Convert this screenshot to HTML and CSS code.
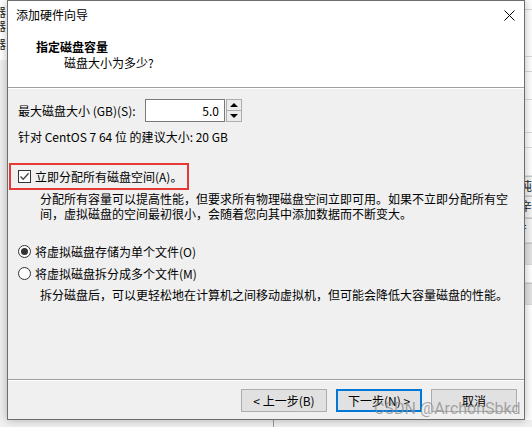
FILE: index.html
```html
<!DOCTYPE html>
<html lang="zh-CN">
<head>
    <meta charset="UTF-8">
    <title>添加硬件向导</title>
    <link rel="stylesheet" href="styles.css">
</head>
<body>
    <div class="desk">
        <div class="side side-left">
            <div class="glyphs">
                <span class="cut c1">器</span>
                <span class="cut c2">器</span>
                <span class="cut c3">器</span>
            </div>
        </div>

        <div class="dialog">
            <div class="header">
                <div class="titlebar">
                    <span class="title">添加硬件向导</span>
                    <svg class="close" width="11" height="11" viewBox="0 0 11 11">
                        <path d="M0.5 0.5 L10.5 10.5 M10.5 0.5 L0.5 10.5" stroke="#000" stroke-width="1" fill="none"/>
                    </svg>
                </div>
                <div class="heading">指定磁盘容量</div>
                <div class="subheading">磁盘大小为多少?</div>
            </div>

            <div class="content">
                <div class="size-row">
                    <span class="size-label">最大磁盘大小 (GB)(S):</span>
                    <div class="num-input">5.0</div>
                    <div class="spinner">
                        <span class="spin-btn"><i class="arrow-up"></i></span>
                        <span class="spin-btn"><i class="arrow-down"></i></span>
                    </div>
                </div>
                <p class="hint">针对 CentOS 7 64 位 的建议大小: 20 GB</p>

                <div class="highlight">
                    <span class="check">
                        <svg width="11" height="11" viewBox="0 0 11 11">
                            <path d="M1.5 5.5 L4.2 8.3 L9.6 2.2" stroke="#444" stroke-width="1.3" fill="none"/>
                        </svg>
                    </span>
                    立即分配所有磁盘空间(A)。
                </div>
                <p class="desc">分配所有容量可以提高性能，但要求所有物理磁盘空间立即可用。如果不立即分配所有空<br>间，虚拟磁盘的空间最初很小，会随着您向其中添加数据而不断变大。</p>

                <div class="radio-row first"><span class="radio on"></span>将虚拟磁盘存储为单个文件(O)</div>
                <div class="radio-row"><span class="radio"></span>将虚拟磁盘拆分成多个文件(M)</div>
                <p class="desc desc-split">拆分磁盘后，可以更轻松地在计算机之间移动虚拟机，但可能会降低大容量磁盘的性能。</p>
            </div>

            <div class="footer">
                <button class="btn">&lt; 上一步(B)</button>
                <button class="btn btn-default">下一步(N) &gt;</button>
                <button class="btn">取消</button>
            </div>
        </div>

        <div class="side side-right">
            <div class="cell h10"></div>
            <div class="cell h47"></div>
            <div class="cell h15"></div>
            <div class="cell h28"></div>
            <div class="cell h33"></div>
            <div class="cell h15"></div>
            <div class="cell h28 plain"></div>
            <div class="cell h20 txt"><span class="cut">盹</span></div>
            <div class="cell h22 txt"><span class="cut">辛</span></div>
            <div class="cell h25 txt"><span class="cut">扌</span></div>
            <div class="cell h22 grey"></div>
            <div class="cell h18 plain"></div>
            <div class="cell h22 grey"></div>
        </div>
    </div>
    <div class="below"><span class="vline"></span></div>

    <div class="watermark">CSDN @ArchonSbkd</div>
</body>
</html>
```

FILE: styles.css
```css
* {
    box-sizing: border-box;
}

body {
    margin: 0;
    background: #f0f0f0;
    color: #000;
    font-family: "Noto Sans CJK SC", "Noto Sans", sans-serif;
    font-size: 12px;
    overflow: hidden;
}

.desk {
    display: flex;
    height: 420px;
}

/* background windows peeking out at the sides */
.side {
    width: 7px;
    overflow: hidden;
}

.glyphs {
    background: #fff;
    height: 60px;
    display: flex;
    flex-direction: column;
}

.cut {
    display: block;
    font-size: 12px;
    line-height: 14px;
    width: 12px;
    margin-left: -6px;
    color: #222;
}

.c1 { margin-top: 5px; }
.c2 { margin-top: 0; }
.c3 { margin-top: 4px; }

.side-right {
    display: flex;
    flex-direction: column;
    background: #fff;
}

.cell {
    border-bottom: 1px solid #d8d8d8;
    flex-shrink: 0;
}

.cell.plain { border-bottom-color: #e6e6e6; }
.cell.txt { background: #f4f4f4; border-top: 1px solid #c8c8c8; }
.cell.grey { background: #e3e3e3; border-top: 1px solid #c8c8c8; }
.cell .cut { margin-left: -5px; line-height: 18px; }

.h10 { height: 10px; }
.h15 { height: 15px; }
.h18 { height: 18px; }
.h20 { height: 20px; }
.h22 { height: 22px; }
.h25 { height: 25px; }
.h28 { height: 28px; }
.h33 { height: 33px; }
.h47 { height: 47px; }

.below {
    height: 7px;
    padding-left: 273px;
}

.vline {
    display: block;
    width: 1px;
    height: 7px;
    background: #9a9a9a;
}

/* dialog */
.dialog {
    position: relative;
    width: 518px;
    height: 420px;
    border: 1px solid #6e6e6e;
    background: #f0f0f0;
    box-shadow: 0 0 9px rgba(0, 0, 0, 0.28);
    display: flex;
    flex-direction: column;
}

.header {
    height: 87px;
    background: #fff;
    border-bottom: 1px solid #a0a0a0;
    box-shadow: 0 1px 0 #fff;
    flex-shrink: 0;
}

.titlebar {
    display: flex;
    align-items: center;
    justify-content: space-between;
    height: 16px;
    margin-top: 6px;
    padding: 0 9px 0 8px;
    line-height: 16px;
}

.close {
    display: block;
    margin-top: 1px;
}

.heading {
    margin-top: 16px;
    padding-left: 28px;
    line-height: 16px;
    font-weight: bold;
}

.subheading {
    padding-left: 56px;
    line-height: 16px;
}

.content {
    flex: 1;
    padding: 11px 0 0 10px;
    border-bottom: 1px solid #a0a0a0;
}

.size-row {
    display: flex;
    align-items: center;
    height: 23px;
}

.size-label {
    width: 127px;
    line-height: 16px;
}

.num-input {
    width: 80px;
    height: 23px;
    border: 1px solid #7a7a7a;
    background: #fff;
    text-align: right;
    padding-right: 5px;
    line-height: 21px;
}

.spinner {
    display: flex;
    flex-direction: column;
    margin-left: 1px;
    width: 16px;
    height: 23px;
}

.spin-btn {
    flex: 1;
    display: flex;
    align-items: center;
    justify-content: center;
    border: 1px solid #adadad;
    background: #ececec;
}

.spin-btn + .spin-btn {
    border-top: none;
}

.arrow-up,
.arrow-down {
    width: 0;
    height: 0;
    border-left: 4px solid transparent;
    border-right: 4px solid transparent;
}

.arrow-up { border-bottom: 4px solid #000; }
.arrow-down { border-top: 4px solid #000; }

.hint {
    margin: 7px 0 0;
    line-height: 16px;
}

.highlight {
    display: flex;
    align-items: center;
    width: 180px;
    height: 27px;
    margin: 18px 0 0 -9px;
    padding-left: 7px;
    border: 2px solid #e53935;
}

.check {
    display: flex;
    align-items: center;
    justify-content: center;
    width: 13px;
    height: 13px;
    margin-right: 4px;
    border: 1px solid #333;
    background: #fff;
}

.desc {
    margin: 1px 0 0;
    padding-left: 22px;
    line-height: 15px;
}

.desc-split {
    margin-top: 3px;
    line-height: 16px;
}

.radio-row {
    display: flex;
    align-items: center;
    height: 22px;
}

.radio-row.first {
    margin-top: 19px;
}

.radio {
    display: flex;
    align-items: center;
    justify-content: center;
    width: 13px;
    height: 13px;
    margin-right: 4px;
    border: 1px solid #333;
    border-radius: 50%;
    background: #fff;
}

.radio.on::after {
    content: "";
    width: 7px;
    height: 7px;
    border-radius: 50%;
    background: #333;
}

.footer {
    height: 39px;
    flex-shrink: 0;
    border-top: 1px solid #fff;
    display: flex;
    justify-content: flex-end;
    gap: 9px;
    padding: 8px 7px 0 0;
}

.btn {
    width: 86px;
    height: 23px;
    padding: 0;
    border: 1px solid #adadad;
    background: #e1e1e1;
    color: #000;
    font-family: "Noto Sans CJK SC", sans-serif;
    font-size: 12px;
    line-height: 20px;
}

.btn-default {
    border: 2px solid #0078d7;
}

.watermark {
    position: absolute;
    left: 374px;
    top: 400px;
    font-family: Roboto, "Liberation Sans", sans-serif;
    font-size: 16px;
    line-height: 18px;
    color: rgba(140, 140, 140, 0.75);
    white-space: nowrap;
}
```
